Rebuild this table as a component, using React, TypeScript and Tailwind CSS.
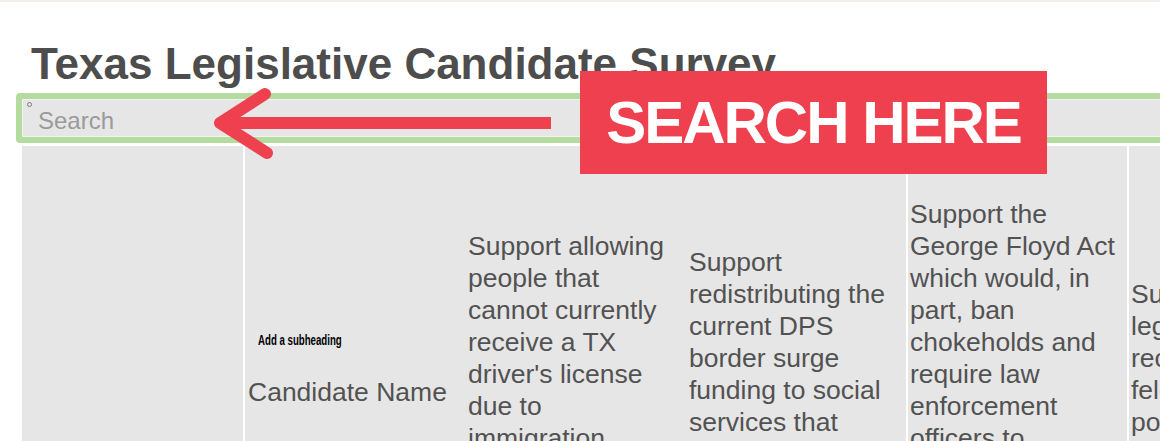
import React from "react";

type Column = { lines: string[]; divider?: boolean; width: string; pad: string };

const columns: Column[] = [
  {
    width: "w-[221px]",
    pad: "pl-[4px]",
    lines: [
      "Support allowing",
      "people that",
      "cannot currently",
      "receive a TX",
      "driver's license",
      "due to",
      "immigration",
      "status to obtain",
      "one?",
    ],
  },
  {
    width: "w-[221px]",
    pad: "pl-[4px]",
    lines: [
      "Support",
      "redistributing the",
      "current DPS",
      "border surge",
      "funding to social",
      "services that",
      "address root",
      "causes?",
    ],
  },
  {
    width: "w-[221px]",
    pad: "pl-[2px]",
    divider: true,
    lines: [
      "Support the",
      "George Floyd Act",
      "which would, in",
      "part, ban",
      "chokeholds and",
      "require law",
      "enforcement",
      "officers to",
      "intervene when",
      "they witness",
      "misconduct?",
    ],
  },
  {
    width: "w-[221px]",
    pad: "pl-[2px]",
    divider: true,
    lines: ["Support", "legislation", "reclassifying", "felony", "possession", "offenses?"],
  },
];

const sans = "font-['Liberation_Sans',Arial,sans-serif]";

function HeaderCell({ col }: { col: Column }) {
  return (
    <div
      className={`flex h-full shrink-0 items-center ${col.width} ${col.pad} ${
        col.divider ? "border-l-2 border-white" : ""
      }`}
    >
      <div className="text-[26.5px] leading-[32px] text-[#525252]">
        {col.lines.map((line) => (
          <div key={line} className="whitespace-nowrap">
            {line}
          </div>
        ))}
      </div>
    </div>
  );
}

export default function App() {
  return (
    <div className={`relative h-[441px] w-[1160px] overflow-hidden border-t-2 border-[#f6eeec] bg-white ${sans}`}>
      <h1 className="ml-[31px] mt-[40px] whitespace-nowrap text-[44px] font-bold leading-[44px] text-[#4d4d4d]">
        Texas Legislative Candidate Survey
      </h1>

      {/* search field */}
      <div className="ml-[16px] mt-[7px] h-[50px] w-[1200px] rounded-[4px] border-[6px] border-[#b4dc9e]">
        <div className="relative h-full border border-[#f2f2f2] bg-[#e6e6e6] pl-[15px] pt-[5px]">
          <span className="absolute left-[4px] top-[2px] h-[5px] w-[5px] rounded-full border border-[#7a7a7a]" />
          <span className="text-[24px] leading-[32px] text-[#9a9a9a]">Search</span>
        </div>
      </div>

      {/* survey table header */}
      <div className="ml-[22px] mt-[3px] flex h-[456px] bg-[#e6e6e6]">
        <div className="h-full w-[223px] shrink-0 border-r-2 border-white" />
        <div className="flex h-full w-[219px] shrink-0 items-center pb-[12px] pl-[3px]">
          <div>
            <div className="ml-[10px] inline-block origin-left scale-x-[0.69] whitespace-nowrap text-[14px] font-bold leading-[16px] text-black">
              Add a subheading
            </div>
            <div className="mt-[24px] whitespace-nowrap text-[26.5px] leading-[32px] text-[#525252]">
              Candidate Name
            </div>
          </div>
        </div>
        {columns.map((col, i) => (
          <HeaderCell key={i} col={col} />
        ))}
      </div>

      {/* callout arrow */}
      <svg
        className="pointer-events-none absolute left-0 top-0"
        width="1160"
        height="441"
        viewBox="0 0 1160 441"
        fill="none"
      >
        <path d="M551 121H224" stroke="#ef4050" strokeWidth="12" />
        <path
          d="M265 92L220 121L267 151"
          stroke="#ef4050"
          strokeWidth="12"
          strokeLinecap="round"
          strokeLinejoin="round"
        />
      </svg>

      <div className="absolute left-[580px] top-[69px] flex h-[103px] w-[467px] items-center justify-center bg-[#ef4050]">
        <span className="whitespace-nowrap text-[60px] font-bold leading-none tracking-[-2px] text-white">
          SEARCH HERE
        </span>
      </div>
    </div>
  );
}
